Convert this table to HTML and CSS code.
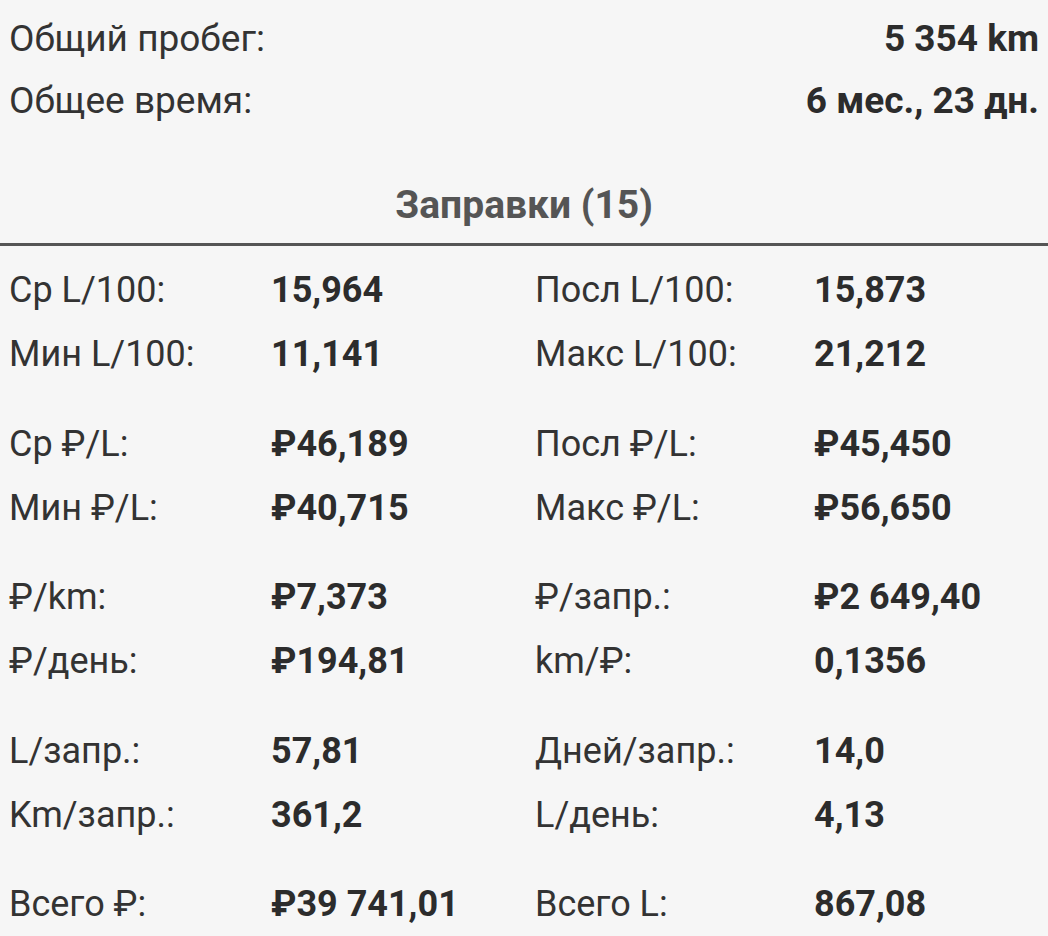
FILE: index.html
```html
<!DOCTYPE html>
<html lang="ru">
<head>
<meta charset="utf-8">
<link rel="stylesheet" href="styles.css">
</head>
<body>
<div class="page">
  <div class="summary">
    <div class="sum-row"><span class="sum-label">Общий пробег:</span><span class="sum-value">5 354 km</span></div>
    <div class="sum-row"><span class="sum-label">Общее время:</span><span class="sum-value">6 мес., 23 дн.</span></div>
  </div>
  <div class="section-head">Заправки (15)</div>
  <div class="stats">
    <div class="group">
      <span class="lbl">Ср L/100:</span><span class="val">15,964</span><span class="lbl">Посл L/100:</span><span class="val">15,873</span>
      <span class="lbl">Мин L/100:</span><span class="val">11,141</span><span class="lbl">Макс L/100:</span><span class="val">21,212</span>
    </div>
    <div class="group">
      <span class="lbl">Ср ₽/L:</span><span class="val">₽46,189</span><span class="lbl">Посл ₽/L:</span><span class="val">₽45,450</span>
      <span class="lbl">Мин ₽/L:</span><span class="val">₽40,715</span><span class="lbl">Макс ₽/L:</span><span class="val">₽56,650</span>
    </div>
    <div class="group">
      <span class="lbl">₽/km:</span><span class="val">₽7,373</span><span class="lbl">₽/запр.:</span><span class="val">₽2 649,40</span>
      <span class="lbl">₽/день:</span><span class="val">₽194,81</span><span class="lbl">km/₽:</span><span class="val">0,1356</span>
    </div>
    <div class="group">
      <span class="lbl">L/запр.:</span><span class="val">57,81</span><span class="lbl">Дней/запр.:</span><span class="val">14,0</span>
      <span class="lbl">Km/запр.:</span><span class="val">361,2</span><span class="lbl">L/день:</span><span class="val">4,13</span>
    </div>
    <div class="group">
      <span class="lbl">Всего ₽:</span><span class="val">₽39 741,01</span><span class="lbl">Всего L:</span><span class="val">867,08</span>
    </div>
  </div>
</div>
</body>
</html>
```
FILE: styles.css
```css
html, body {
  margin: 0;
  padding: 0;
  background: #f6f6f6;
}
body {
  font-family: Roboto, "Noto Sans", "Liberation Sans", sans-serif;
  color: #333333;
  width: 1048px;
  height: 936px;
  overflow: hidden;
}
.page {
  padding: 8px 9px 0 9px;
}
.summary {
  display: flex;
  flex-direction: column;
}
.sum-row {
  display: flex;
  justify-content: space-between;
  font-size: 37px;
  line-height: 62px;
}
.sum-value {
  font-weight: 700;
  color: #2c2c2c;
}
.section-head {
  margin: 41px -9px 0 -9px;
  text-align: center;
  font-size: 39px;
  font-weight: 700;
  line-height: 64px;
  color: #555555;
  padding-bottom: 6px;
  border-bottom: 3px solid #555555;
}
.stats {
  padding-top: 12px;
  display: flex;
  flex-direction: column;
  gap: 25.5px;
}
.group {
  display: grid;
  grid-template-columns: 262px 264px 279px 1fr;
  font-size: 36px;
  line-height: 64px;
}
.lbl {
  color: #333333;
}
.val {
  font-weight: 700;
  color: #2c2c2c;
}
```
